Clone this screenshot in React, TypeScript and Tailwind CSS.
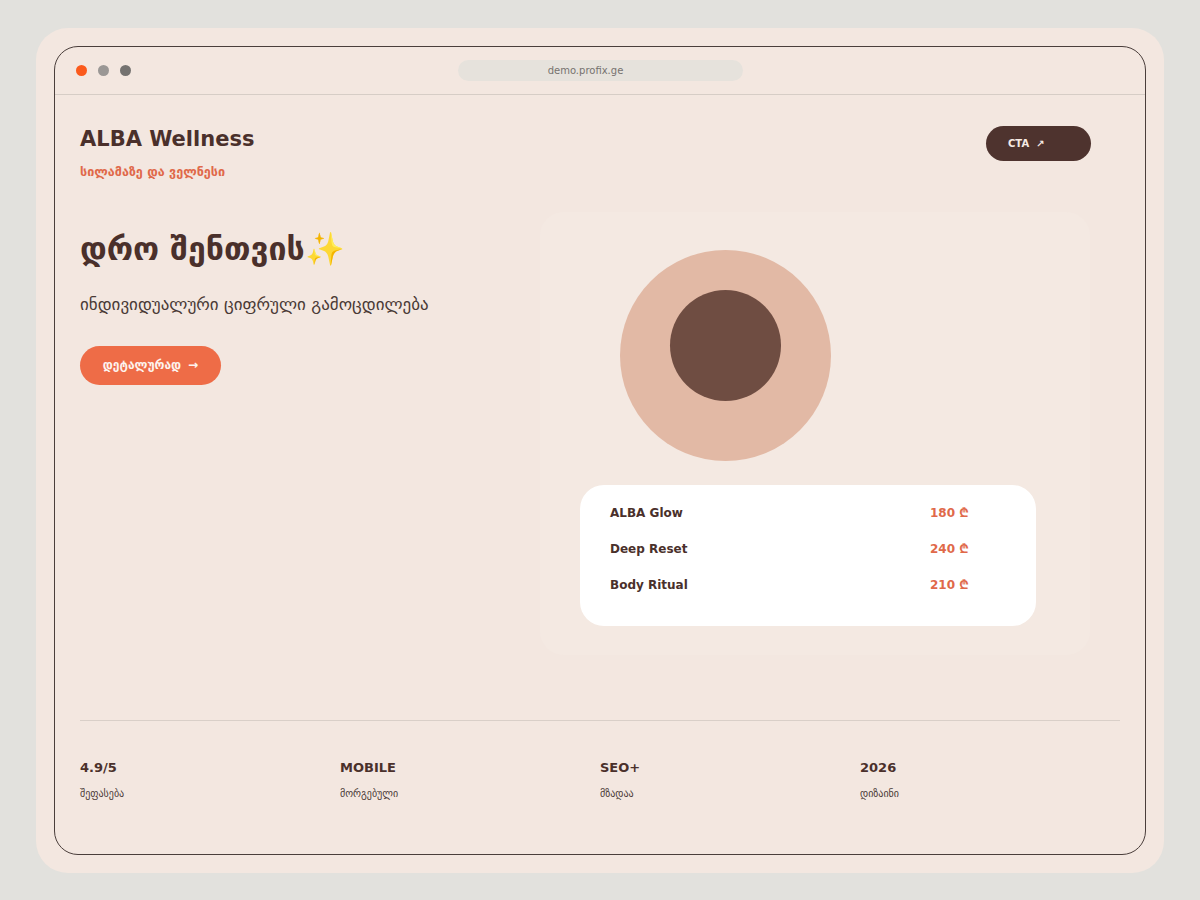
import React from 'react';

const services = [
  { name: 'ALBA Glow', price: '180 ₾' },
  { name: 'Deep Reset', price: '240 ₾' },
  { name: 'Body Ritual', price: '210 ₾' },
];

const stats = [
  { value: '4.9/5', label: 'შეფასება' },
  { value: 'MOBILE', label: 'მორგებული' },
  { value: 'SEO+', label: 'მზადაა' },
  { value: '2026', label: 'დიზაინი' },
];

export default function App() {
  return (
    <div
      className="min-h-[900px] w-[1200px] bg-[#e2e1dd] px-[36px] pt-[28px] pb-[27px] text-[#4a302b]"
      style={{ fontFamily: '"DejaVu Sans", "Noto Sans", sans-serif' }}
    >
      <div className="rounded-[32px] bg-[#f3e7e0] p-[18px]">
        {/* Browser frame */}
        <div className="flex h-[809px] flex-col rounded-[24px] border border-[#4a3e3b]">
          {/* Title bar */}
          <div className="relative flex h-[48px] shrink-0 items-center border-b border-[#d6cdc6] px-[21px]">
            <div className="flex items-center gap-[11px]">
              <span className="h-[11px] w-[11px] rounded-full bg-[#fb5a1c]" />
              <span className="h-[11px] w-[11px] rounded-full bg-[#9a9795]" />
              <span className="h-[11px] w-[11px] rounded-full bg-[#747270]" />
            </div>
            <div className="absolute left-[403px] top-[13px] flex h-[21px] w-[285px] items-center justify-center rounded-full bg-[#e6e2dc] pr-[30px] text-[10px] text-[#77726f]">
              demo.profix.ge
            </div>
          </div>

          <div className="flex flex-1 flex-col px-[25px]">
            {/* Header */}
            <div className="flex items-start justify-between pt-[31px] pr-[29px]">
              <div>
                <h1 className="text-[21px] font-bold leading-[26px] text-[#4a302b]">ALBA Wellness</h1>
                <p className="mt-[11px] text-[12.6px] font-bold text-[#e0694a]">სილამაზე და ველნესი</p>
              </div>
              <button className="flex h-[35px] w-[105px] items-center rounded-full bg-[#4e332e] pl-[22px] text-[10px] font-bold text-[#f6ebe4]">
                CTA <span className="ml-[7px]">↗</span>
              </button>
            </div>

            {/* Hero */}
            <div className="mt-[30px] flex pr-[30px]">
              <div className="w-[460px] pt-[17px]">
                <h2 className="text-[32px] font-bold leading-[40px] text-[#4a302b]">დრო შენთვის✨</h2>
                <p className="mt-[23px] text-[17px] leading-[24px] text-[#4a3a36]">ინდივიდუალური ციფრული გამოცდილება</p>
                <button className="mt-[30px] flex h-[39px] w-[141px] items-center justify-center rounded-full bg-[#ee6c47] text-[12px] font-bold text-[#fdf3ee]">
                  დეტალურად <span className="ml-[7px]">→</span>
                </button>
              </div>
              <div className="flex h-[443px] w-[550px] flex-col rounded-[24px] bg-[#f4e9e2] pt-[38px]">
                <div className="ml-[80px] flex h-[211px] w-[211px] justify-center rounded-full bg-[#e2b9a5] pt-[40px]">
                  <div className="h-[111px] w-[111px] rounded-full bg-[#6f4d42]" />
                </div>
                <div className="ml-[40px] mt-[24px] w-[456px] rounded-[24px] bg-white pl-[30px] pt-[10px] pb-[23px]">
                  {services.map((s) => (
                    <div key={s.name} className="grid h-[36px] grid-cols-[320px_1fr] items-center text-[12px] font-bold">
                      <span className="text-[#4a302b]">{s.name}</span>
                      <span className="text-[#e0694a]">{s.price}</span>
                    </div>
                  ))}
                </div>
              </div>
            </div>

            {/* Stats */}
            <div className="mt-[65px] border-t border-[#d9cfc8] pt-[38px]">
              <div className="grid grid-cols-4">
                {stats.map((s) => (
                  <div key={s.value}>
                    <div className="text-[13px] font-bold leading-[18px] text-[#4a302b]">{s.value}</div>
                    <div className="mt-[9px] text-[10px] text-[#4a3a36]">{s.label}</div>
                  </div>
                ))}
              </div>
            </div>
          </div>
        </div>
      </div>
    </div>
  );
}
